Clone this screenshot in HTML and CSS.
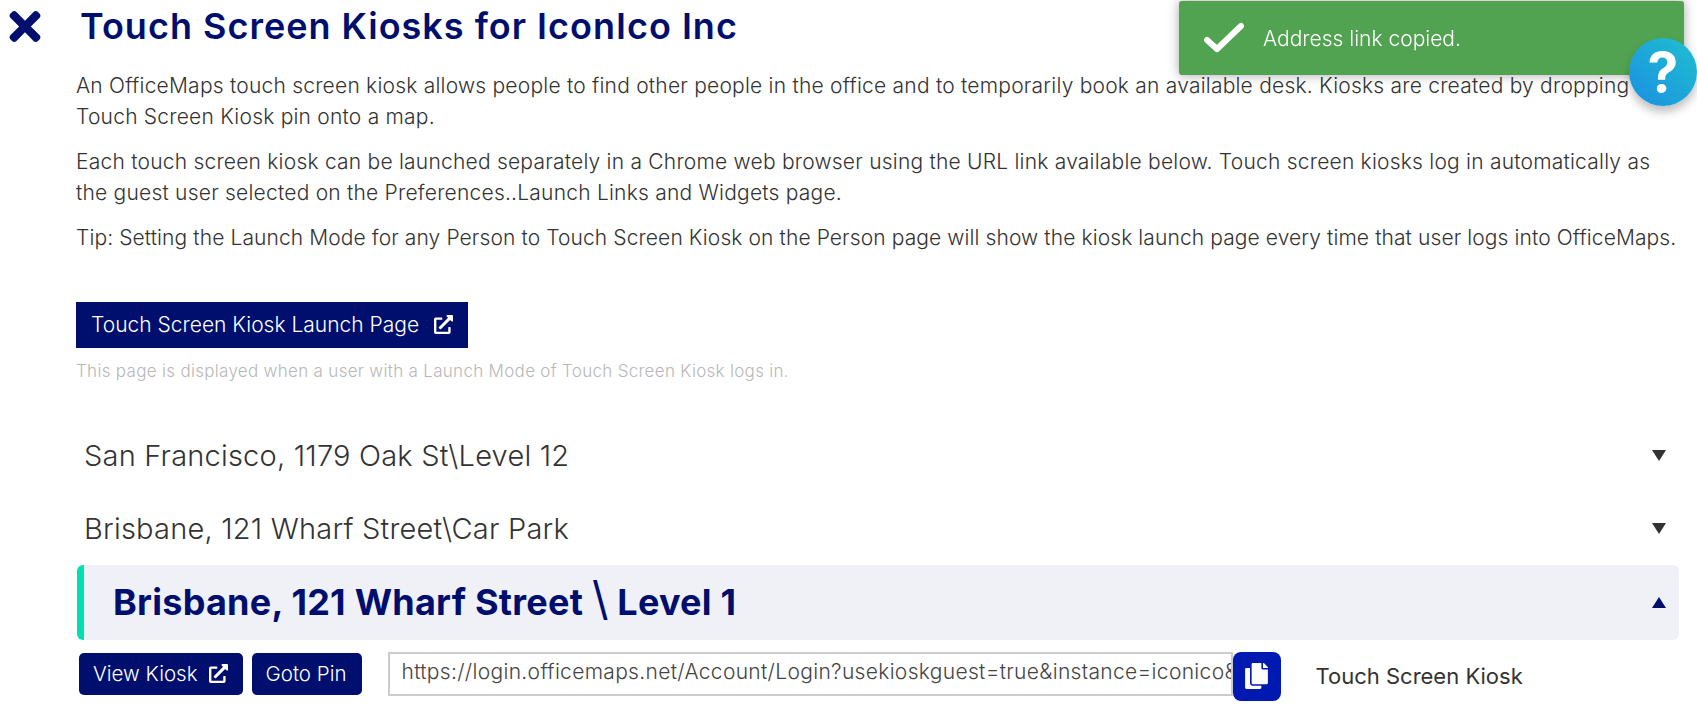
FILE: index.html
```html
<!DOCTYPE html>
<html>
<head>
  <meta charset="UTF-8" />
  <title>Touch Screen Kiosks</title>
  <link rel="stylesheet" href="styles.css">
</head>
<body>
  <div class="title-row">
    <svg class="close-icon" viewBox="0 0 352 512"><path d="M242.72 256l100.07-100.07c12.28-12.28 12.28-32.19 0-44.48l-22.24-22.24c-12.28-12.28-32.19-12.28-44.48 0L176 189.28 75.93 89.21c-12.28-12.28-32.19-12.28-44.48 0L9.21 111.45c-12.28 12.28-12.28 32.19 0 44.48L109.28 256 9.21 356.07c-12.28 12.28-12.28 32.19 0 44.48l22.24 22.24c12.28 12.28 32.2 12.28 44.48 0L176 322.72l100.07 100.07c12.28 12.28 32.2 12.28 44.48 0l22.24-22.24c12.28-12.28 12.28-32.19 0-44.48L242.72 256z"/></svg>
    <h1>Touch Screen Kiosks for IconIco Inc</h1>
  </div>

  <div class="content">
    <p class="wide">An OfficeMaps touch screen kiosk allows people to find other people in the office and to temporarily book an available desk. Kiosks are created by dropping a<br>Touch Screen Kiosk pin onto a map.</p>
    <p class="wide">Each touch screen kiosk can be launched separately in a Chrome web browser using the URL link available below. Touch screen kiosks log in automatically as<br>the guest user selected on the Preferences..Launch Links and Widgets page.</p>
    <p>Tip: Setting the Launch Mode for any Person to Touch Screen Kiosk on the Person page will show the kiosk launch page every time that user logs into OfficeMaps.</p>

    <button class="launch-btn">Touch Screen Kiosk Launch Page
      <svg class="ext-icon" viewBox="0 0 512 512"><path d="M432,320H400a16,16,0,0,0-16,16V448H64V128H208a16,16,0,0,0,16-16V80a16,16,0,0,0-16-16H48A48,48,0,0,0,0,112V464a48,48,0,0,0,48,48H400a48,48,0,0,0,48-48V336A16,16,0,0,0,432,320ZM488,0h-128c-21.37,0-32.05,25.91-17,41l35.73,35.73L135,320.37a24,24,0,0,0,0,34L157.67,377a24,24,0,0,0,34,0L435.28,133.32,471,169c15,15,41,4.5,41-17V24A24,24,0,0,0,488,0Z"/></svg>
    </button>
    <div class="hint">This page is displayed when a user with a Launch Mode of Touch Screen Kiosk logs in.</div>

    <div class="level-list">
      <div class="level-row">
        <span>San Francisco, 1179 Oak St\Level 12</span>
        <span class="arrow-down"></span>
      </div>
      <div class="level-row">
        <span>Brisbane, 121 Wharf Street\Car Park</span>
        <span class="arrow-down"></span>
      </div>
      <div class="level-row active">
        <span>Brisbane, 121 Wharf Street <span class="slash">\</span> Level 1</span>
        <span class="arrow-up"></span>
      </div>
    </div>

    <div class="kiosk-row">
      <button class="small-btn">View Kiosk
        <svg class="ext-icon" viewBox="0 0 512 512"><path d="M432,320H400a16,16,0,0,0-16,16V448H64V128H208a16,16,0,0,0,16-16V80a16,16,0,0,0-16-16H48A48,48,0,0,0,0,112V464a48,48,0,0,0,48,48H400a48,48,0,0,0,48-48V336A16,16,0,0,0,432,320ZM488,0h-128c-21.37,0-32.05,25.91-17,41l35.73,35.73L135,320.37a24,24,0,0,0,0,34L157.67,377a24,24,0,0,0,34,0L435.28,133.32,471,169c15,15,41,4.5,41-17V24A24,24,0,0,0,488,0Z"/></svg>
      </button>
      <button class="small-btn">Goto Pin</button>
      <input class="url-input" type="text" value="https://login.officemaps.net/Account/Login?usekioskguest=true&amp;instance=iconico&amp;kiosk=1">
      <button class="copy-btn">
        <svg viewBox="0 0 448 512"><path d="M320 448v40c0 13.255-10.745 24-24 24H24c-13.255 0-24-10.745-24-24V120c0-13.255 10.745-24 24-24h72v296c0 30.879 25.121 56 56 56h168zm0-344V0H152c-13.255 0-24 10.745-24 24v368c0 13.255 10.745 24 24 24h272c13.255 0 24-10.745 24-24V128H344c-13.2 0-24-10.8-24-24zm120.971-31.029L375.029 7.029A24 24 0 0 0 358.059 0H352v96h96v-6.059a24 24 0 0 0-7.029-16.97z"/></svg>
      </button>
      <span class="kiosk-name">Touch Screen Kiosk</span>
    </div>
  </div>

  <div class="toast">
    <svg class="toast-check" viewBox="0 0 42 32"><polyline points="4,18 14,27 38,4"/></svg>
    <span>Address link copied.</span>
  </div>
  <div class="help">?</div>
</body>
</html>
```

FILE: styles.css
```css
body {
  margin: 0;
  font-family: Inter, "Noto Sans", sans-serif;
  font-weight: 300;
  color: #333;
  background: #fff;
  overflow: hidden;
}
.title-row {
  display: flex;
  align-items: center;
  height: 52px;
  padding-left: 9px;
}
.close-icon {
  width: 32px;
  height: 45px;
  fill: #000f6e;
  margin-right: 39px;
}
h1 {
  margin: 0;
  font-size: 36px;
  font-weight: 600;
  letter-spacing: 1px;
  color: #000f6e;
  white-space: nowrap;
}
.content {
  padding: 19px 18px 0 76px;
}
.content p {
  margin: 0 0 15px;
  font-size: 21px;
  letter-spacing: 0.1px;
  line-height: 30.5px;
  white-space: nowrap;
}
.content p.wide {
  letter-spacing: 0.22px;
}
.launch-btn {
  display: flex;
  align-items: center;
  gap: 15px;
  margin-top: 48px;
  height: 46px;
  padding: 0 15px;
  background: #000f6e;
  color: #fff;
  border: none;
  font-family: inherit;
  font-weight: 300;
  font-size: 21px;
}
.ext-icon {
  width: 19px;
  height: 19px;
  fill: #fff;
}
.hint {
  margin-top: 13px;
  font-size: 17px;
  letter-spacing: 0.3px;
  color: #b8b8b8;
}
.level-list {
  margin-top: 38px;
}
.level-row {
  display: flex;
  align-items: center;
  justify-content: space-between;
  height: 73px;
  padding: 0 13px 0 8px;
  font-size: 29px;
  letter-spacing: 0.2px;
  color: #333;
}
.arrow-down, .arrow-up {
  width: 0;
  height: 0;
  border-left: 7px solid transparent;
  border-right: 7px solid transparent;
}
.arrow-down {
  border-top: 11px solid #333;
}
.arrow-up {
  border-bottom: 11px solid #000f6e;
}
.level-row.active {
  height: 75px;
  margin-left: 1px;
  padding-left: 29px;
  background: #f0f1f7;
  border-left: 7px solid #00e0b0;
  border-radius: 6px;
  font-size: 36px;
  font-weight: 700;
  letter-spacing: 0.25px;
  color: #000f6e;
}
.slash {
  font-size: 46px;
  font-weight: 400;
  line-height: 36px;
  letter-spacing: 0;
}
.kiosk-row {
  display: flex;
  align-items: flex-start;
  margin-top: 12px;
  padding-left: 3px;
}
.small-btn {
  display: flex;
  align-items: center;
  gap: 11px;
  height: 42px;
  margin-top: 1px;
  margin-right: 9px;
  padding: 0 15px 0 14px;
  background: #000f6e;
  color: #fff;
  border: none;
  border-radius: 5px;
  font-family: inherit;
  font-weight: 300;
  font-size: 20.5px;
}
.url-input {
  width: 845px;
  height: 44px;
  box-sizing: border-box;
  margin-left: 17px;
  padding: 0 0 4px 12px;
  border: 2px solid #ccc;
  font-family: inherit;
  font-weight: 300;
  font-size: 21px;
  letter-spacing: 0.32px;
  color: #444;
}
.copy-btn {
  display: flex;
  align-items: center;
  justify-content: center;
  width: 48px;
  height: 49px;
  background: #0019b0;
  border: none;
  border-radius: 8px;
}
.copy-btn svg {
  width: 23px;
  height: 26px;
  fill: #fff;
}
.kiosk-name {
  margin-left: 35px;
  font-size: 22px;
  line-height: 49px;
  font-weight: 400;
  color: #333;
}
.toast {
  position: fixed;
  top: 1px;
  left: 1179px;
  width: 505px;
  height: 74px;
  display: flex;
  align-items: center;
  gap: 18px;
  padding-left: 24px;
  box-sizing: border-box;
  background: #51a351;
  border-radius: 3px;
  box-shadow: 0 0 12px rgba(0,0,0,0.35);
  color: #fff;
  font-size: 21px;
}
.toast-check {
  width: 42px;
  height: 32px;
  fill: none;
  stroke: #fff;
  stroke-width: 6;
  stroke-linecap: round;
  stroke-linejoin: round;
}
.help {
  position: fixed;
  top: 38px;
  left: 1629px;
  width: 68px;
  height: 68px;
  border-radius: 50%;
  background: linear-gradient(45deg, #1b8fe2, #1fc0cf);
  box-shadow: 0 6px 10px rgba(0,0,0,0.25);
  color: #fff;
  font-size: 55px;
  font-weight: 700;
  line-height: 68px;
  text-align: center;
}
```
